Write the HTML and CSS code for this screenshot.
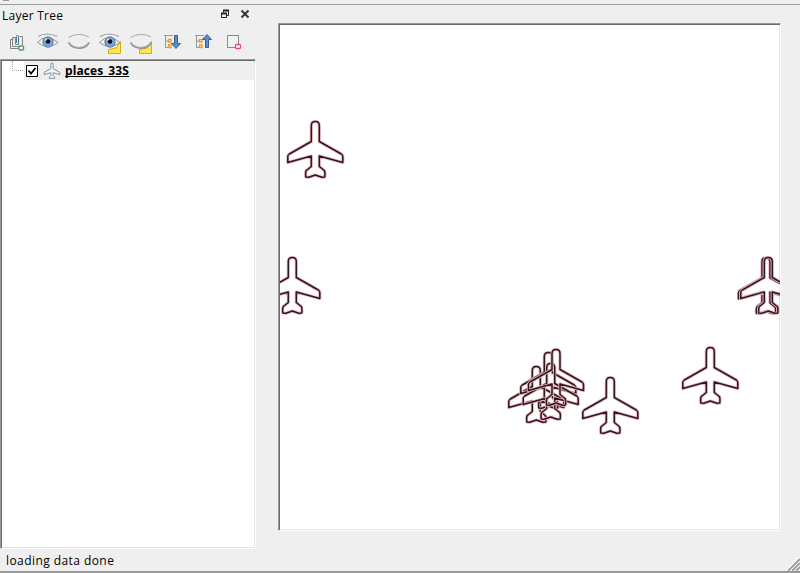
FILE: index.html
```html
<!DOCTYPE html>
<html lang="en">
<head>
<meta charset="utf-8">
<title>Layer Tree</title>
<link rel="stylesheet" href="styles.css">
</head>
<body>
<div class="strip"><span class="handle"></span></div>
<main class="main">
  <section class="dock">
    <header class="dock-title">
      <span class="title-text">Layer Tree</span>
      <svg class="title-icons" width="34" height="14" viewBox="218 7 34 14">
        <path d="M223.5 12.5V10.5H228.5V15.5H226.5" fill="none" stroke="#222"/><path d="M223 10.5H229M221 13.5H227" stroke="#222" stroke-width="2"/><path d="M221.5 13V17.5H226.5V13" fill="none" stroke="#222"/>
        <path d="M241.5 10.5L248.5 17.5M248.5 10.5L241.5 17.5" stroke="#333" stroke-width="1.9"/>
      </svg>
    </header>
    <nav class="toolbar">
      <svg class="tool" viewBox="5 30 24 24"><g fill="none" stroke="#7d8783"><path d="M13.500 39.500H10.500V48.500H18"/><path d="M15.500 37.500H12.500V46.500H19"/><path d="M19.500 36.500H22.500V45M15.500 37V44.500H19"/><path d="M16.500 43V36.500Q17.500 33.500 18.500 36.500V44" stroke="#4c748c"/></g><rect x="19" y="46" width="4.500" height="4" rx="1" fill="#fff" stroke="#5c9874" stroke-width="1.500"/></svg>
      <svg class="tool" viewBox="0 0 24 24"><use href="#eye"/></svg>
      <svg class="tool" viewBox="0 0 24 24"><use href="#lid"/></svg>
      <svg class="tool" viewBox="0 0 24 24"><path d="M22.500 11.500V23.500H10.500V19.500L18 18Z" fill="#ffe84d" stroke="#d2ad1c"/><use href="#eye"/></svg>
      <svg class="tool" viewBox="0 0 24 24"><path d="M22.500 11.500V23.500H10.500V19.500L18 18Z" fill="#ffe84d" stroke="#d2ad1c"/><use href="#lid"/></svg>
      <svg class="tool" viewBox="0 0 24 24"><use href="#branches"/><path d="M14.500 5.500H17.500V13.500H20.500L16 18.500L11.500 13.500H14.500Z" fill="#5b8fc9" stroke="#365f8d"/></svg>
      <svg class="tool" viewBox="0 0 24 24"><use href="#branches"/><path d="M14.500 17.500H17.500V9.500H20.500L16 4.500L11.500 9.500H14.500Z" fill="#5b8fc9" stroke="#365f8d"/></svg>
      <svg class="tool" viewBox="0 0 24 24"><path d="M5.500 5.500H16.500V17.500H5.500Z" fill="#f1f1f1" stroke="#888"/><rect x="13.500" y="14.500" width="5" height="4" rx="1" fill="#fff" stroke="#ed4b57" stroke-width="1.300"/><path d="M14 16.500H18" stroke="#fff"/></svg>
    </nav>
    <div class="tree">
      <div class="row">
        <span class="branch"></span>
        <div class="item">
          <svg class="check" width="12" height="12" viewBox="0 0 12 12"><path d="M.5.5H11.500V11.500H.5Z" fill="#fff" stroke="#000"/><path d="M2.500 5.500L5 8.500L9.500 3" fill="none" stroke="#000" stroke-width="1.800"/></svg>
          <svg class="plane-icon" width="18" height="18" viewBox="-32 -3 64 64"><use href="#plane" class="small-plane"/></svg>
          <span class="layer-name">places_33S</span>
        </div>
      </div>
    </div>
  </section>
  <section class="canvas">
    <svg class="map" width="500" height="504" viewBox="280 25 500 504">
      <defs>
        <path id="plane" d="M-4 20.500V4.500Q-4 .5 0 .5T4 4.500V20.500L26 33Q27.500 34 27.500 35.500V41.500L4 35V45.500L9 49.500Q10 51 9.500 56L6.500 56.300L0 54L-6.500 56.300L-9.500 56Q-10 51-9 49.500L-4 45.500V35L-27.500 41.500V35.500Q-27.500 34-26 33Z"/>
        <g id="pin"><use href="#plane" class="halo"/><use href="#plane" class="ink"/></g>
        <g id="eye"><path d="M1.500 12.500Q10 2.500 22 12.500Q12 20.500 1.500 12.500Z" fill="#f4f6f6" stroke="#8c9390"/><path d="M2 6.500Q11 1.500 21 6.500" fill="none" stroke="#989d98" stroke-width="1.200"/><circle cx="12" cy="12" r="5.200" fill="#7aa5d8" stroke="#476b99" stroke-width=".8"/><circle cx="12" cy="11.500" r="2.300" fill="#111"/><circle cx="10" cy="9.500" r="1" fill="#d8e9f6"/></g>
        <g id="lid" fill="none"><path d="M1.500 7.500Q12 1.500 22 7" stroke="#a6aaa6"/><path d="M1.500 12.500Q5 18 12 18T22 12.500" stroke="#929792" stroke-width="2"/><path d="M2.500 13.500Q12 21 21 13.500" stroke="#c4c7c4" stroke-width=".8"/></g>
        <g id="branches"><path d="M4 5.500H13M5.500 6V17.500H9M5.500 11H9" fill="none" stroke="#969696"/><path d="M8.500 9.500H11V12H8.500ZM8.500 15H11V17.500H8.500Z" fill="#fff" stroke="#f09835" stroke-width="1.300"/></g>
      </defs>
      <use href="#pin" x="315.300" y="121"/>
      <use href="#pin" x="292.300" y="257"/>
      <use href="#pin" x="766" y="257.300"/>
      <use href="#pin" x="768.300" y="257"/>
      <use href="#pin" x="536.300" y="366"/>
      <use href="#pin" x="548.300" y="352"/>
      <use href="#pin" x="550.700" y="363"/>
      <use href="#pin" x="556" y="349"/>
      <use href="#pin" x="610.300" y="377"/>
      <use href="#pin" x="710.300" y="347"/>
    </svg>
  </section>
</main>
<footer class="status"><span class="status-text">loading data done</span>
  <svg class="grip" width="13" height="13" viewBox="0 0 13 13"><path d="M0 13L13 0M4 13L13 4M8 13L13 8" stroke="#fff" stroke-width="3"/><path d="M1 13L13 1M5 13L13 5M9 13L13 9" stroke="#999" stroke-width="1.800"/></svg>
</footer>
</body>
</html>
```

FILE: styles.css
```css
* { box-sizing: border-box; }
body {
  margin: 0;
  width: 800px;
  height: 573px;
  overflow: hidden;
  display: flex;
  flex-direction: column;
  background: #efefef;
  color: #000;
  font: 12px/16px "Open Sans", "Noto Sans", sans-serif;
}
svg { display: block; flex: none; }
.strip { height: 5px; flex: none; border-bottom: 1px solid #9d9d9d; }
.handle { display: block; width: 6px; height: 1px; margin-left: 3px; background: #999; }
.main { display: flex; height: 545px; flex: none; }
.dock { width: 256px; }
.dock-title { height: 22px; padding: 2px 4px 0 2px; display: flex; justify-content: space-between; }
.title-text { margin-top: 1px; letter-spacing: .25px; }
.toolbar { height: 32px; padding: 3px 0 0 5px; display: flex; gap: 7px; }
.tool { width: 24px; height: 24px; }
.tree {
  height: 490px;
  background: #fff;
  border: 1px solid #fff;
  border-top-color: #999;
  border-left-color: #999;
  box-shadow: inset 1px 1px #696969, inset -1px -1px #e5e5e5;
  padding: 1px;
}
.row { display: flex; height: 19px; }
.branch { width: 11px; height: 10px; margin-left: 10px; border-left: 1px dotted #aaa; border-bottom: 1px dotted #aaa; }
.item { flex: 1; margin-left: 1px; display: flex; align-items: center; background: #efefef; padding-left: 2px; }
.check { margin-top: 1px; }
.plane-icon { margin: 1px 0 0 5px; }
.small-plane { fill: #f5f7fa; stroke: #7d8aa0; stroke-width: 3.5px; }
.layer-name { height: 16px; margin: 1px 0 0 4px; font-weight: 700; text-decoration: underline; text-decoration-skip-ink: none; text-underline-offset: 1px; letter-spacing: .1px; }
.canvas {
  width: 503px;
  height: 508px;
  margin: 18px 0 0 22px;
  border: 1px solid #fff;
  border-top-color: #999;
  border-left-color: #999;
  box-shadow: inset 1px 1px #696969, inset -1px -1px #e5e5e5;
  background: #fff;
  padding: 1px;
}
.halo { fill: none; stroke: #e6b6bf; stroke-width: 3.2px; stroke-linejoin: round; }
.ink { fill: none; stroke: #30171d; stroke-width: 1.5px; stroke-linejoin: round; }
.status {
  height: 23px;
  flex: none;
  padding-left: 6px;
  display: flex;
  justify-content: space-between;
  align-items: flex-end;
  border-bottom: 2px solid #999;
}
.status-text { align-self: flex-start; margin-top: 3px; font-size: 12px; letter-spacing: .43px; }
```
